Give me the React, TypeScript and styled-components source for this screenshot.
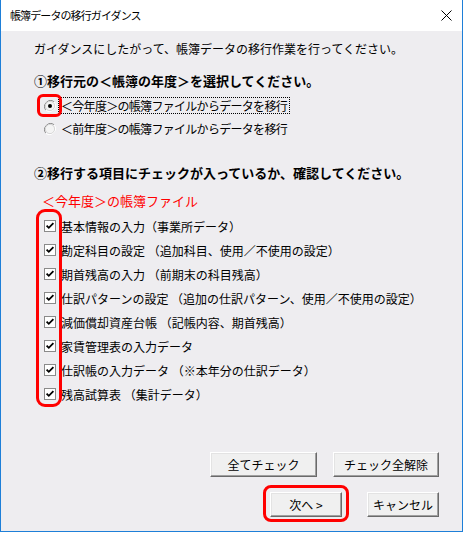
import React from "react";
import styled, { createGlobalStyle } from "styled-components";

const Global = createGlobalStyle`
  html, body { margin: 0; padding: 0; background: #ffffff; }
  body { font-family: "Noto Sans CJK JP", "Noto Sans", sans-serif; color: #000; }
  * { box-sizing: border-box; }
`;

const Page = styled.div`
  width: 468px;
  height: 540px;
  background: #ffffff;
`;

const Dialog = styled.div`
  width: 463px;
  height: 532px;
  display: flex;
  flex-direction: column;
  border: 1px solid #1e7fd8;
  border-top: none;
`;

const TitleBar = styled.div`
  height: 31px;
  flex: none;
  background: #ffffff;
  display: flex;
  align-items: center;
  justify-content: space-between;
  padding: 0 10px 1px 9px;
`;

const TitleText = styled.span`
  font-size: 11px;
  letter-spacing: -0.9px;
  color: #000;
`;

const CloseIcon = () => (
  <svg width="11" height="11" viewBox="0 0 11 11">
    <path d="M0.5 0.5 L10.5 10.5 M10.5 0.5 L0.5 10.5" stroke="#000" strokeWidth="1" />
  </svg>
);

const Body = styled.div`
  flex: 1;
  background: #eeedf0;
  display: flex;
  flex-direction: column;
  padding: 9px 23px 14px 33px;
`;

const Intro = styled.div`
  height: 18px;
  line-height: 18px;
  font-size: 12px;
  white-space: nowrap;
`;

const Heading = styled.div<{ $top: number }>`
  margin-top: ${(p) => p.$top}px;
  height: 18px;
  line-height: 18px;
  font-size: 13px;
  font-weight: 700;
  letter-spacing: 0;
  white-space: nowrap;
`;

const RadioGroup = styled.div`
  margin-top: 4px;
  display: flex;
  flex-direction: column;
`;

const OptionRow = styled.div<{ $h: number }>`
  height: ${(p) => p.$h}px;
  display: flex;
  align-items: center;
  gap: 5px;
  padding-left: 10px;
  font-size: 12px;
  white-space: nowrap;
`;

const MarkBox = styled.span`
  position: relative;
  width: 12px;
  height: 12px;
  flex: none;
  display: block;
`;

const RadioHighlight = styled.span`
  position: absolute;
  left: -7px;
  right: -6px;
  top: -6px;
  bottom: -5px;
  border: 3px solid #ff0000;
  border-radius: 6px;
`;

const Label = styled.span<{ $focus?: boolean; $tight?: boolean }>`
  padding: 0 2px;
  line-height: 15px;
  letter-spacing: ${(p) => (p.$tight ? "-0.7px" : "0")};
  outline: ${(p) => (p.$focus ? "1px dotted #000" : "none")};
  margin-left: -2px;
`;

const RedLabel = styled.div`
  margin-top: 10px;
  margin-left: 8px;
  height: 18px;
  line-height: 18px;
  font-size: 13px;
  color: #ff0000;
  white-space: nowrap;
`;

const CheckList = styled.div`
  position: relative;
  margin-top: 4px;
  display: flex;
  flex-direction: column;
`;

const CheckHighlight = styled.span`
  position: absolute;
  left: 2px;
  width: 26px;
  top: -5px;
  bottom: -1px;
  border: 3px solid #ff0000;
  border-radius: 9px;
`;

const ButtonArea = styled.div`
  margin-top: auto;
  display: flex;
  flex-direction: column;
  align-items: flex-end;
  gap: 15px;
`;

const ButtonRow = styled.div<{ $gap: number }>`
  display: flex;
  gap: ${(p) => p.$gap}px;
`;

const Btn = styled.div<{ $w: number }>`
  position: relative;
  width: ${(p) => p.$w}px;
  height: 25px;
  display: flex;
  align-items: center;
  justify-content: center;
  font-size: 12px;
  background: #f0f0f0;
  border: 1px solid;
  border-color: #ffffff #6a6a6a #6a6a6a #ffffff;
  box-shadow: inset -1px -1px 0 #a0a0a0, inset 1px 1px 0 #e3e3e3;
  white-space: nowrap;
`;

const BtnHighlight = styled.span`
  position: absolute;
  left: -8px;
  right: -8px;
  top: -8px;
  bottom: -6px;
  border: 3px solid #ff0000;
  border-radius: 8px;
`;

const Radio = ({ checked }: { checked: boolean }) => (
  <svg width="12" height="12" viewBox="0 0 12 12" style={{ display: "block" }}>
    <path d="M10.2 1.8 A6 6 0 0 0 1.8 10.2" stroke="#8a8a8a" strokeWidth="1" fill="none" />
    <path d="M1.8 10.2 A6 6 0 0 0 10.2 1.8" stroke="#ffffff" strokeWidth="1" fill="none" />
    <circle cx="6" cy="6" r="4.6" fill="#f4f4f4" stroke="#cfcfcf" strokeWidth="0.8" />
    {checked && <circle cx="6" cy="6" r="2" fill="#000" />}
  </svg>
);

const Check = () => (
  <svg width="12" height="12" viewBox="0 0 12 12" style={{ display: "block" }}>
    <rect x="0.5" y="0.5" width="11" height="11" fill="#ffffff" stroke="#8a8a8a" />
    <path d="M2.6 5.6 L4.8 7.8 L9.4 3.2" stroke="#000" strokeWidth="1.8" fill="none" />
  </svg>
);

const items = [
  "基本情報の入力（事業所データ）",
  "勘定科目の設定 （追加科目、使用／不使用の設定）",
  "期首残高の入力 （前期末の科目残高）",
  "仕訳パターンの設定 （追加の仕訳パターン、使用／不使用の設定）",
  "減価償却資産台帳 （記帳内容、期首残高）",
  "家賃管理表の入力データ",
  "仕訳帳の入力データ （※本年分の仕訳データ）",
  "残高試算表 （集計データ）",
];

export default function App() {
  return (
    <Page>
      <Global />
      <Dialog>
        <TitleBar>
          <TitleText>帳簿データの移行ガイダンス</TitleText>
          <CloseIcon />
        </TitleBar>
        <Body>
          <Intro>ガイダンスにしたがって、帳簿データの移行作業を行ってください。</Intro>
          <Heading $top={14}>①移行元の＜帳簿の年度＞を選択してください。</Heading>
          <RadioGroup>
            <OptionRow $h={23}>
              <MarkBox>
                <Radio checked />
                <RadioHighlight />
              </MarkBox>
              <Label $focus $tight>＜今年度＞の帳簿ファイルからデータを移行</Label>
            </OptionRow>
            <OptionRow $h={23}>
              <MarkBox>
                <Radio checked={false} />
              </MarkBox>
              <Label $tight>＜前年度＞の帳簿ファイルからデータを移行</Label>
            </OptionRow>
          </RadioGroup>
          <Heading $top={24}>②移行する項目にチェックが入っているか、確認してください。</Heading>
          <RedLabel>＜今年度＞の帳簿ファイル</RedLabel>
          <CheckList>
            {items.map((t) => (
              <OptionRow $h={24} key={t}>
                <MarkBox>
                  <Check />
                </MarkBox>
                <Label>{t}</Label>
              </OptionRow>
            ))}
            <CheckHighlight />
          </CheckList>
          <ButtonArea>
            <ButtonRow $gap={16}>
              <Btn $w={107}>全てチェック</Btn>
              <Btn $w={106}>チェック全解除</Btn>
            </ButtonRow>
            <ButtonRow $gap={25}>
              <Btn $w={72}>
                次へ &gt;
                <BtnHighlight />
              </Btn>
              <Btn $w={72}>キャンセル</Btn>
            </ButtonRow>
          </ButtonArea>
        </Body>
      </Dialog>
    </Page>
  );
}
